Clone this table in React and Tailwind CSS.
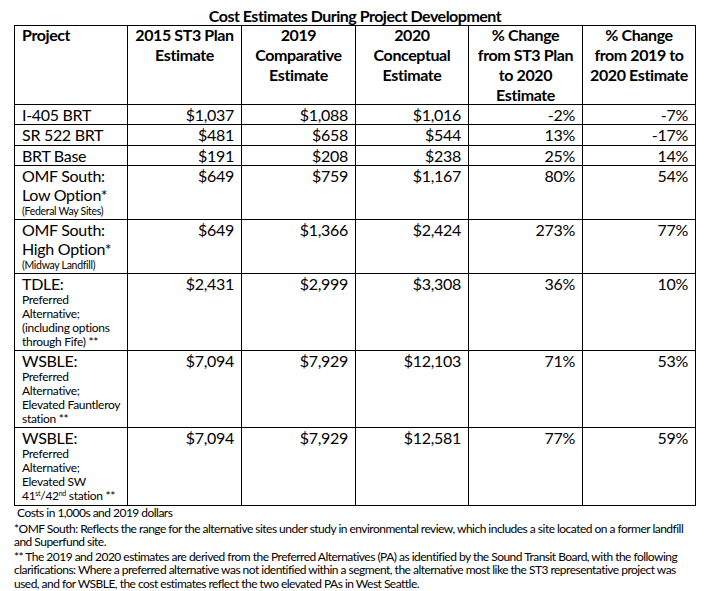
const font = { fontFamily: 'Lato, "Open Sans", sans-serif' };

const cols = 'grid-cols-[113px_114px_114px_113px_114px_113px]';

const rows = [
  { h: 'h-[20px]', name: ['I-405 BRT'], v: ['$1,037', '$1,088', '$1,016', '-2%', '-7%'] },
  { h: 'h-[21px]', name: ['SR 522 BRT'], v: ['$481', '$658', '$544', '13%', '-17%'] },
  { h: 'h-[20px]', name: ['BRT Base'], v: ['$191', '$208', '$238', '25%', '14%'] },
  {
    h: 'h-[54px]',
    name: ['OMF South:', 'Low Option*'],
    tiny: '(Federal Way Sites)',
    v: ['$649', '$759', '$1,167', '80%', '54%'],
  },
  {
    h: 'h-[54px]',
    name: ['OMF South:', 'High Option*'],
    tiny: '(Midway Landfill)',
    v: ['$649', '$1,366', '$2,424', '273%', '77%'],
  },
  {
    h: 'h-[77px]',
    name: ['TDLE:'],
    small: ['Preferred', 'Alternative;', '(including options', 'through Fife) **'],
    v: ['$2,431', '$2,999', '$3,308', '36%', '10%'],
  },
  {
    h: 'h-[77px]',
    name: ['WSBLE:'],
    small: ['Preferred', 'Alternative;', 'Elevated Fauntleroy', 'station **'],
    v: ['$7,094', '$7,929', '$12,103', '71%', '53%'],
  },
  {
    h: 'h-[78px]',
    name: ['WSBLE:'],
    small: ['Preferred', 'Alternative;', 'Elevated SW', 'sup'],
    v: ['$7,094', '$7,929', '$12,581', '77%', '59%'],
  },
];

const heads = [
  ['2015 ST3 Plan', 'Estimate'],
  ['2019', 'Comparative', 'Estimate'],
  ['2020', 'Conceptual', 'Estimate'],
  ['% Change', 'from ST3 Plan', 'to 2020', 'Estimate'],
  ['% Change', 'from 2019 to', '2020 Estimate'],
];

function SmallLine({ text }) {
  if (text === 'sup') {
    return (
      <div className="whitespace-nowrap">
        41<span className="text-[7px] leading-none align-[4px]">st</span>/42
        <span className="text-[7px] leading-none align-[4px]">nd</span> station **
      </div>
    );
  }
  return <div className="whitespace-nowrap">{text}</div>;
}

export default function App() {
  return (
    <div className="w-[718px] h-[591px] bg-white text-black pt-[6px] overflow-hidden" style={font}>
      <div className="w-[682px] ml-[14px] text-center font-bold text-[16px] leading-[19px] tracking-[-0.5px]">
        Cost Estimates During Project Development
      </div>

      <div className={`ml-[14px] w-[682px] grid ${cols} border-l border-t border-black`}>
        {/* header */}
        <div className="h-[79px] border-r border-b border-black pl-[7px] font-bold text-[16px] leading-[20px] tracking-[-0.4px]">
          <div className="-mt-[1px]">Project</div>
        </div>
        {heads.map((lines, i) => (
          <div
            key={i}
            className="h-[79px] border-r border-b border-black text-center font-bold text-[16px] leading-[20px] tracking-[-0.4px]"
          >
            <div className="-mt-[1px]">
              {lines.map((l) => (
                <div key={l} className="whitespace-nowrap">{l}</div>
              ))}
            </div>
          </div>
        ))}

        {/* body */}
        {rows.map((r, ri) => (
          <div key={ri} className="contents">
            <div className={`${r.h} border-r border-b border-black pl-[7px] text-[16px] leading-[19px] tracking-[-0.3px]`}>
              {r.name.map((n) => (
                <div key={n} className="whitespace-nowrap">{n}</div>
              ))}
              {r.tiny && (
                <div className="whitespace-nowrap text-[10.5px] leading-[13px] tracking-[-0.3px] mt-[1px]">{r.tiny}</div>
              )}
              {r.small && (
                <div className="text-[12px] leading-[14px] tracking-[-0.3px]">
                  {r.small.map((s) => (
                    <SmallLine key={s} text={s} />
                  ))}
                </div>
              )}
            </div>
            {r.v.map((v, vi) => (
              <div
                key={vi}
                className={`${r.h} border-r border-b border-black text-right pr-[7px] text-[16px] leading-[19px] tracking-[-0.3px]`}
              >
                {v}
              </div>
            ))}
          </div>
        ))}
      </div>

      <div className="ml-[14px] text-[12px] leading-[13.5px] tracking-[-0.52px] whitespace-nowrap">
        <div className="pl-[3px]">Costs in 1,000s and 2019 dollars</div>
        <div className="mt-[2px]">
          *OMF South: Reflects the range for the alternative sites under study in environmental review, which includes a site located on a former landfill
          <br />
          and Superfund site.
        </div>
        <div className="mt-[1px]">
          ** The 2019 and 2020 estimates are derived from the Preferred Alternatives (PA) as identified by the Sound Transit Board, with the following
          <br />
          clarifications: Where a preferred alternative was not identified within a segment, the alternative most like the ST3 representative project was
          <br />
          used, and for WSBLE, the cost estimates reflect the two elevated PAs in West Seattle.
        </div>
      </div>
    </div>
  );
}
